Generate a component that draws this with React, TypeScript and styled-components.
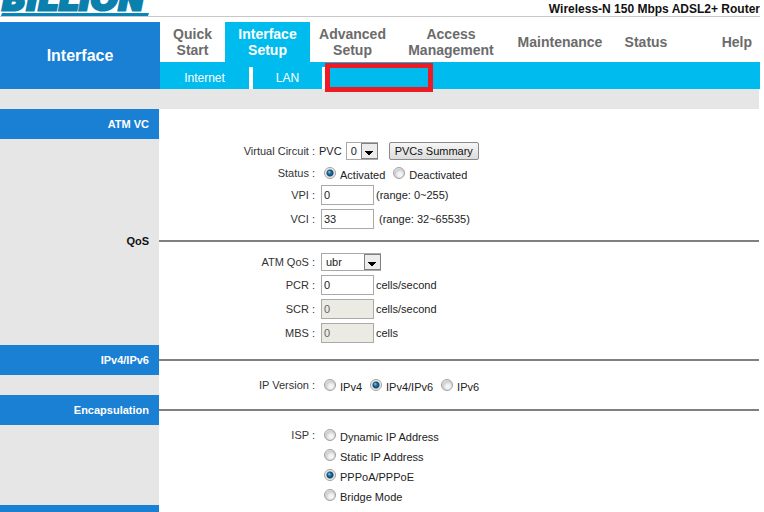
import React, { useState } from "react";
import styled, { createGlobalStyle, css } from "styled-components";

const GlobalStyle = createGlobalStyle`
  html { scrollbar-width: none; }
  body {
    margin: 0;
    background: #fff;
    color: #222;
    font-family: "Liberation Sans", Arial, sans-serif;
    font-size: 11px;
    line-height: 14px;
  }
  *, *::before, *::after { box-sizing: border-box; }
`;

const Page = styled.div`
  padding-right: 4px;
`;

const Header = styled.header`
  display: flex;
  justify-content: space-between;
  align-items: flex-end;
  height: 17px;
  margin-bottom: 5px;
  border-bottom: 1px solid #c8c8c8;
  overflow: hidden;
`;

const Logo = styled.svg`
  flex: none;
  display: block;
  width: 150px;
  height: 40px;
`;

const Product = styled.strong`
  font-size: 12px;
  line-height: 14px;
  color: #111;
`;

const TopBar = styled.div`
  display: grid;
  grid-template-columns: 160px 1fr;
`;

const Heading = styled.h1`
  display: flex;
  align-items: center;
  justify-content: center;
  margin: 0;
  background: #1a80d4;
  color: #fff;
  font-size: 16px;
  line-height: 20px;
`;

const MainNav = styled.nav`
  display: grid;
  grid-template-columns: 65fr 85fr 85fr 112fr 106fr 66fr 81fr;
  height: 40px;
`;

const NavLink = styled.a<{ $active?: boolean; $end?: boolean }>`
  display: flex;
  align-items: center;
  justify-content: ${(p) => (p.$end ? "flex-end" : "center")};
  padding-right: ${(p) => (p.$end ? "8px" : "0")};
  background: ${(p) => (p.$active ? "#00bbee" : "#fff")};
  color: ${(p) => (p.$active ? "#fff" : "#6b6b6b")};
  font-size: 14px;
  font-weight: bold;
  line-height: 16px;
  text-align: center;
  text-decoration: none;
  white-space: pre-line;
`;

const SubNav = styled.nav`
  display: flex;
  align-items: flex-end;
  height: 27px;
  background: #00bbee;
`;

const SubLink = styled.a<{ $wide?: boolean }>`
  width: ${(p) => (p.$wide ? "93px" : "73px")};
  height: 22px;
  border-right: 4px solid #fff;
  color: #fff;
  font-size: 12px;
  line-height: 22px;
  text-align: center;
  text-decoration: none;
`;

const MarkedSlot = styled.div`
  position: relative;
  width: 108px;
  height: 27px;
`;

const Marker = styled.span`
  position: absolute;
  inset: 1px 1px -3px -1px;
  border: 5px solid #ed1c24;
`;

const Band = styled.div`
  height: 20px;
  margin-right: 1px;
  background: #e6e6e6;
`;

const Section = styled.section`
  display: grid;
  grid-template-columns: 159px 1fr;
  margin-right: 1px;
`;

const Title = styled.h2<{ $plain?: boolean }>`
  height: ${(p) => (p.$plain ? "20px" : "30px")};
  margin: 0;
  padding-right: 10px;
  background: ${(p) => (p.$plain ? "#e6e6e6" : "#1a80d4")};
  color: ${(p) => (p.$plain ? "#111" : "#fff")};
  font-size: 11px;
  line-height: ${(p) => (p.$plain ? "20px" : "30px")};
  text-align: right;
`;

const Rule = styled.div<{ $hidden?: boolean }>`
  align-self: center;
  height: 2px;
  background: ${(p) => (p.$hidden ? "transparent" : "#808080")};
`;

const Side = styled.div`
  background: #e6e6e6;
`;

const Fields = styled.div`
  display: flex;
  flex-direction: column;
`;

const Row = styled.div<{ $h: number; $tight?: boolean }>`
  display: grid;
  grid-template-columns: 156px 1fr;
  column-gap: ${(p) => (p.$tight ? "4px" : "6px")};
  align-items: center;
  height: ${(p) => p.$h}px;
`;

const labelText = css`
  text-align: right;
  color: #333;
`;

const Label = styled.label`
  ${labelText}
`;

const Caption = styled.span`
  ${labelText}
`;

const Controls = styled.div`
  display: flex;
  align-items: center;
  gap: 2px;
`;

const TextBox = styled.input`
  width: 53px;
  height: 20px;
  padding: 0 2px;
  border: 1px solid #a9a9a9;
  background: #fff;
  color: #222;
  font: inherit;

  &:disabled {
    background: #ebebe4;
    color: #666;
  }
`;

const Unit = styled.span<{ $spaced?: boolean }>`
  padding-left: ${(p) => (p.$spaced ? "3px" : "0")};
`;

const SelectWrap = styled.span<{ $w: number }>`
  position: relative;
  display: block;
  width: ${(p) => p.$w}px;
  height: 18px;
`;

const Select = styled.select`
  appearance: none;
  display: block;
  width: 100%;
  height: 100%;
  padding: 0 18px 0 4px;
  border: 1px solid #a9a9a9;
  border-radius: 0;
  background: #fff;
  color: #222;
  font: inherit;
`;

const Arrow = styled.svg`
  position: absolute;
  top: 1px;
  right: 0;
  width: 17px;
  height: 16px;
  pointer-events: none;
`;

const PvcGroup = styled.div`
  display: flex;
  align-items: center;
  gap: 4px;
`;

const Button = styled.button`
  height: 18px;
  margin-left: 7px;
  padding: 0 5px;
  border: 1px solid #8a8a8a;
  border-radius: 2px;
  background: linear-gradient(#f6f6f6, #dcdcdc);
  color: #111;
  font: inherit;
  line-height: 16px;
`;

const RadioLabel = styled.label`
  display: flex;
  align-items: center;
  gap: 4px;
  white-space: nowrap;
`;

const RadioText = styled.span`
  padding-top: 3px;
`;

const Radio = styled.input`
  appearance: none;
  flex: none;
  width: 12px;
  height: 12px;
  margin: 0;
  border: 1px solid #a0a0a0;
  border-radius: 50%;
  background: radial-gradient(circle at 60% 65%, #f4f4f4 0 20%, #c9ccd0 60%, #eee 75%);

  &:checked {
    background:
      radial-gradient(circle at 42% 40%, #7fd0f0 0, rgba(127, 208, 240, 0) 2px),
      radial-gradient(circle, #2a7fb0 0, #164a70 3px, #dfe3e6 4px, #f4f4f4 5px);
  }
`;

const navItems = [
  { text: "Quick\nStart" },
  { text: "Interface\nSetup", active: true },
  { text: "Advanced\nSetup" },
  { text: "Access\nManagement" },
  { text: "Maintenance" },
  { text: "Status" },
  { text: "Help", end: true },
];

function DropDown({ id, width, options }: { id: string; width: number; options: string[] }) {
  return (
    <SelectWrap $w={width}>
      <Select id={id}>
        {options.map((o) => (
          <option key={o}>{o}</option>
        ))}
      </Select>
      <Arrow viewBox="0 0 17 16" aria-hidden="true">
        <rect x="0.5" y="0.5" width="16" height="15" fill="#ececec" stroke="#808080" />
        <path d="M4 8h8v1h-1v1h-1v1H9v1H7v-1H6v-1H5V9H4z" fill="#000" />
      </Arrow>
    </SelectWrap>
  );
}

function Option({ name, value, current, onPick }: { name: string; value: string; current: string; onPick: (v: string) => void }) {
  return (
    <RadioLabel>
      <Radio type="radio" name={name} checked={current === value} onChange={() => onPick(value)} />
      <RadioText>{value}</RadioText>
    </RadioLabel>
  );
}

function TextRow({ id, label, value, unit, disabled, spaced }: { id: string; label: string; value: string; unit: string; disabled?: boolean; spaced?: boolean }) {
  return (
    <Row $h={24}>
      <Label htmlFor={id}>{label} :</Label>
      <Controls>
        <TextBox id={id} type="text" defaultValue={value} disabled={disabled} />
        <Unit $spaced={spaced}>{unit}</Unit>
      </Controls>
    </Row>
  );
}

const RadioControls = styled(Controls)`
  gap: 8px;
  padding-left: 3px;
`;

export default function App() {
  const [status, setStatus] = useState("Activated");
  const [ip, setIp] = useState("IPv4/IPv6");
  const [isp, setIsp] = useState("PPPoA/PPPoE");
  const ispChoices = ["Dynamic IP Address", "Static IP Address", "PPPoA/PPPoE", "Bridge Mode"];

  return (
    <>
      <GlobalStyle />
      <Page>
        <Header>
          <Logo viewBox="0 0 150 40" role="img" aria-label="BILLION">
            <text x="2" y="34" fill="#0c80ac" stroke="#0c80ac" strokeWidth="3" fontFamily="DejaVu Sans" fontWeight="bold" fontStyle="italic" fontSize="32">
              BILLION
            </text>
            <path d="M2 37h147l-1 3H1z" fill="#0a84b4" />
          </Logo>
          <Product>Wireless-N 150 Mbps ADSL2+ Router</Product>
        </Header>

        <TopBar>
          <Heading>Interface</Heading>
          <div>
            <MainNav>
              {navItems.map((n) => (
                <NavLink key={n.text} href="#" $active={n.active} $end={n.end}>
                  {n.text}
                </NavLink>
              ))}
            </MainNav>
            <SubNav>
              <SubLink href="#" $wide>Internet</SubLink>
              <SubLink href="#">LAN</SubLink>
              <MarkedSlot>
                <Marker />
              </MarkedSlot>
            </SubNav>
          </div>
        </TopBar>
        <Band />

        <Section>
          <Title>ATM VC</Title>
          <Rule $hidden />
          <Side />
          <Fields>
            <Row $h={24} $tight>
              <Label htmlFor="pvc">Virtual Circuit :</Label>
              <PvcGroup>
                <span>PVC</span>
                <DropDown id="pvc" width={32} options={["0", "1", "2", "3"]} />
                <Button type="button">PVCs Summary</Button>
              </PvcGroup>
            </Row>
            <Row $h={20}>
              <Caption>Status :</Caption>
              <RadioControls>
                {["Activated", "Deactivated"].map((v) => (
                  <Option key={v} name="status" value={v} current={status} onPick={setStatus} />
                ))}
              </RadioControls>
            </Row>
            <TextRow id="vpi" label="VPI" value="0" unit="(range: 0~255)" />
            <TextRow id="vci" label="VCI" value="33" unit="(range: 32~65535)" spaced />
          </Fields>
        </Section>

        <Section>
          <Title $plain>QoS</Title>
          <Rule />
          <Side />
          <Fields>
            <Row $h={22}>
              <Label htmlFor="qos">ATM QoS :</Label>
              <DropDown id="qos" width={60} options={["ubr", "cbr", "vbr"]} />
            </Row>
            <TextRow id="pcr" label="PCR" value="0" unit="cells/second" />
            <TextRow id="scr" label="SCR" value="0" unit="cells/second" disabled />
            <TextRow id="mbs" label="MBS" value="0" unit="cells" disabled />
          </Fields>
        </Section>

        <Section>
          <Title>IPv4/IPv6</Title>
          <Rule />
          <Side />
          <Fields>
            <Row $h={20}>
              <Caption>IP Version :</Caption>
              <RadioControls>
                {["IPv4", "IPv4/IPv6", "IPv6"].map((v) => (
                  <Option key={v} name="ip" value={v} current={ip} onPick={setIp} />
                ))}
              </RadioControls>
            </Row>
          </Fields>
        </Section>

        <Section>
          <Title>Encapsulation</Title>
          <Rule />
          <Side />
          <Fields>
            {ispChoices.map((v, i) => (
              <Row $h={20} key={v}>
                <Caption>{i === 0 ? "ISP :" : ""}</Caption>
                <RadioControls>
                  <Option name="isp" value={v} current={isp} onPick={setIsp} />
                </RadioControls>
              </Row>
            ))}
          </Fields>
        </Section>

        <Section>
          <Title />
          <Rule />
        </Section>
      </Page>
    </>
  );
}
